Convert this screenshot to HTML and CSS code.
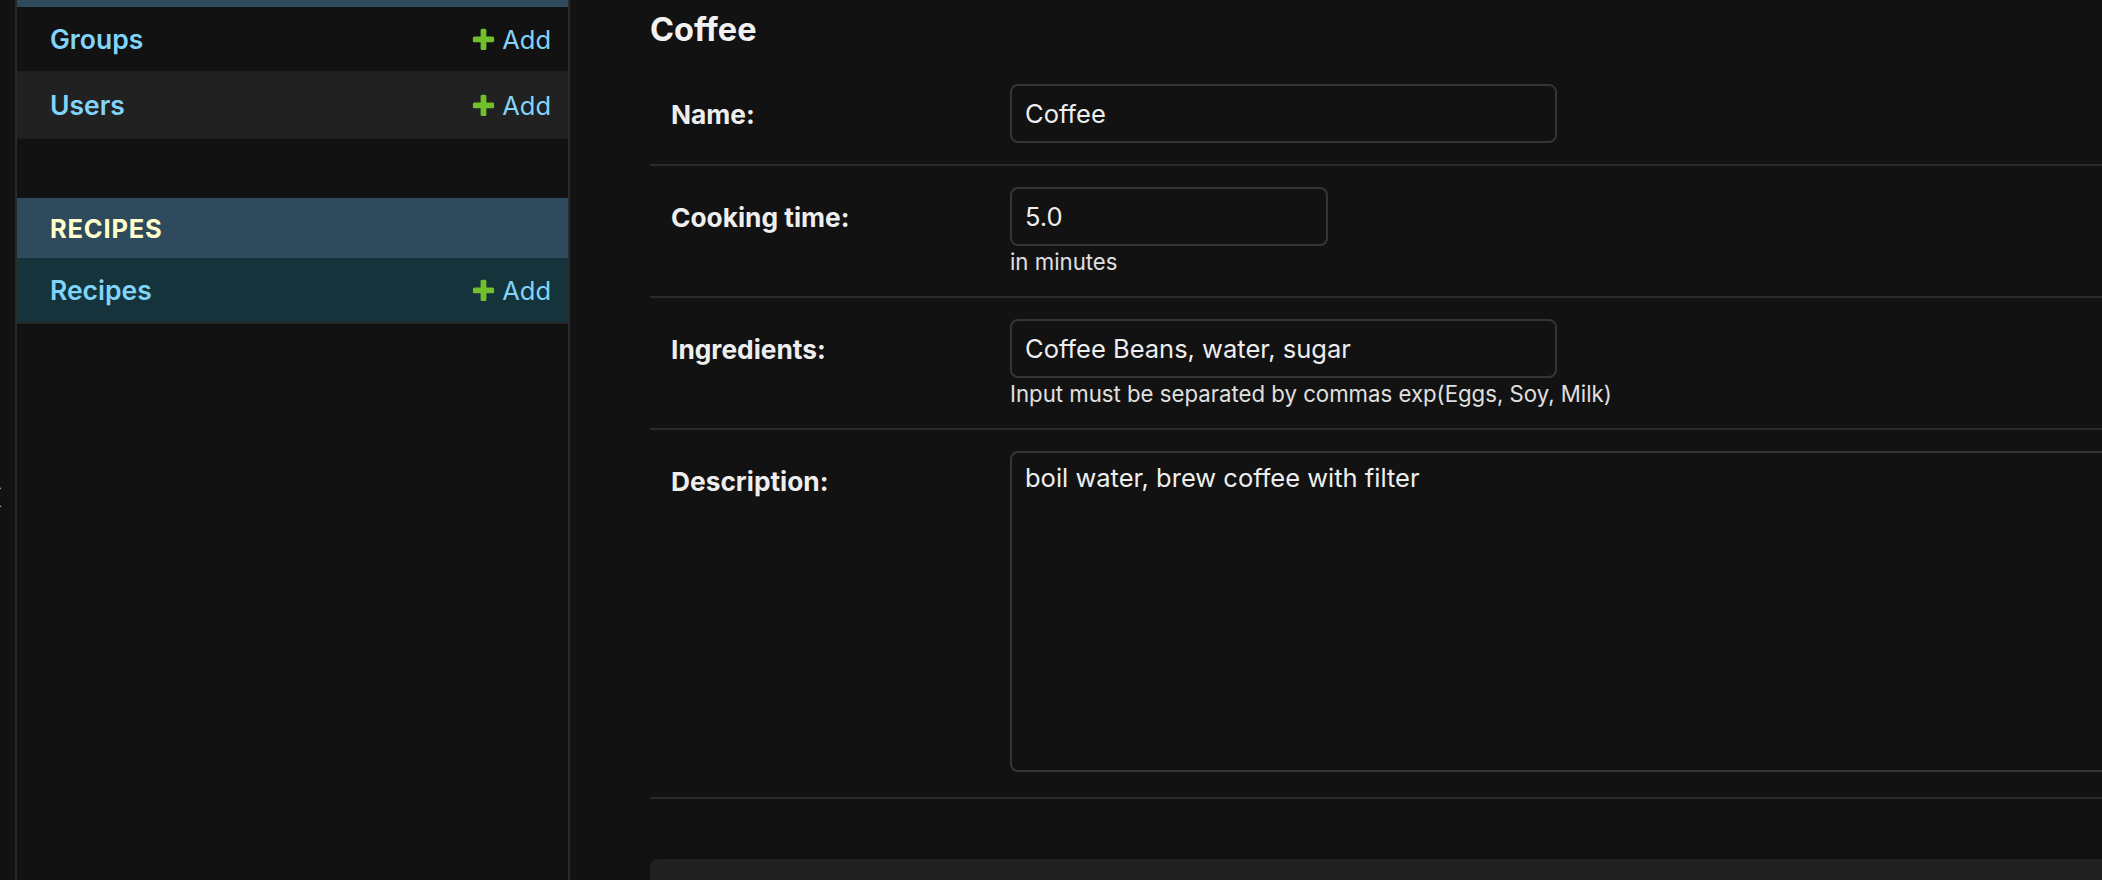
FILE: index.html
```html
<!DOCTYPE html>
<html lang="en">
<head>
<meta charset="utf-8">
<title>Change recipe | Django site admin</title>
<link rel="stylesheet" href="styles.css">
</head>
<body>
<div class="page">
  <div class="toggle"><span class="toggle-glyph">«</span></div>
  <nav class="sidebar">
    <div class="module">
      <div class="caption-tail"></div>
      <div class="model-row">
        <a class="model-link" href="#">Groups</a>
        <a class="addlink" href="#"><svg class="plus" viewBox="0 0 1792 1792" width="27" height="27"><path fill="#70bf2b" d="M1600 796v192q0 40-28 68t-68 28h-416v416q0 40-28 68t-68 28h-192q-40 0-68-28t-28-68v-416h-416q-40 0-68-28t-28-68v-192q0-40 28-68t68-28h416v-416q0-40 28-68t68-28h192q40 0 68 28t28 68v416h416q40 0 68 28t28 68z"/></svg>Add</a>
      </div>
      <div class="model-row alt">
        <a class="model-link" href="#">Users</a>
        <a class="addlink" href="#"><svg class="plus" viewBox="0 0 1792 1792" width="27" height="27"><path fill="#70bf2b" d="M1600 796v192q0 40-28 68t-68 28h-416v416q0 40-28 68t-68 28h-192q-40 0-68-28t-28-68v-416h-416q-40 0-68-28t-28-68v-192q0-40 28-68t68-28h416v-416q0-40 28-68t68-28h192q40 0 68 28t28 68v416h416q40 0 68 28t28 68z"/></svg>Add</a>
      </div>
    </div>
    <div class="module">
      <div class="caption">Recipes</div>
      <div class="model-row current">
        <a class="model-link" href="#">Recipes</a>
        <a class="addlink" href="#"><svg class="plus" viewBox="0 0 1792 1792" width="27" height="27"><path fill="#70bf2b" d="M1600 796v192q0 40-28 68t-68 28h-416v416q0 40-28 68t-68 28h-192q-40 0-68-28t-28-68v-416h-416q-40 0-68-28t-28-68v-192q0-40 28-68t68-28h416v-416q0-40 28-68t68-28h192q40 0 68 28t28 68v416h416q40 0 68 28t28 68z"/></svg>Add</a>
      </div>
    </div>
  </nav>
  <main class="main">
    <h2 class="title">Coffee</h2>
    <div class="fieldset">
      <div class="form-row">
        <label class="label">Name:</label>
        <div class="field">
          <input class="input wide" type="text" value="Coffee">
        </div>
      </div>
      <div class="form-row">
        <label class="label">Cooking time:</label>
        <div class="field">
          <input class="input short" type="text" value="5.0">
          <div class="help">in minutes</div>
        </div>
      </div>
      <div class="form-row">
        <label class="label">Ingredients:</label>
        <div class="field">
          <input class="input wide" type="text" value="Coffee Beans, water, sugar">
          <div class="help">Input must be separated by commas exp(Eggs, Soy, Milk)</div>
        </div>
      </div>
      <div class="form-row">
        <label class="label">Description:</label>
        <div class="field">
          <textarea class="textarea">boil water, brew coffee with filter</textarea>
        </div>
      </div>
    </div>
    <div class="submit-row"></div>
  </main>
</div>
</body>
</html>
```

FILE: styles.css
```css
html, body {
  margin: 0;
  padding: 0;
  background: #121212;
  overflow: hidden;
}
body {
  width: 2102px;
  height: 880px;
  font-family: Inter, "Noto Sans", "Liberation Sans", sans-serif;
  color: #eeeeee;
}
.page {
  display: flex;
  height: 880px;
}
.toggle {
  position: relative;
  width: 15px;
  flex-shrink: 0;
  border-right: 2px solid #2a2a2a;
  overflow: hidden;
}
.toggle-glyph {
  position: absolute;
  right: 12px;
  top: 470px;
  font-size: 42px;
  line-height: 50px;
  color: #81d4fa;
}
.sidebar {
  width: 551px;
  flex-shrink: 0;
  border-right: 2px solid #2a2a2a;
  background: #121212;
}
.module {
  margin-bottom: 59px;
}
.caption-tail {
  height: 7px;
  background: #2f4a5c;
}
.caption {
  height: 60px;
  display: flex;
  align-items: center;
  padding-left: 33px;
  background: #2f4a5c;
  color: #ffffcc;
  font-size: 25.5px;
  font-weight: 700;
  letter-spacing: 0.8px;
  text-transform: uppercase;
}
.model-row {
  height: 64px;
  display: flex;
  align-items: center;
  justify-content: space-between;
  padding: 0 17px 0 33px;
  border-bottom: 2px solid #1e1e1e;
  background: #121212;
}
.model-row.alt {
  background: #212121;
}
.model-row.current {
  background: #14333a;
  border-bottom-color: #272727;
}
.model-link {
  color: #81d4fa;
  text-decoration: none;
  font-size: 26.5px;
  font-weight: 600;
}
.addlink {
  display: flex;
  align-items: center;
  gap: 5px;
  color: #81d4fa;
  text-decoration: none;
  font-size: 25.5px;
}
.plus {
  display: block;
}
.main {
  flex: 1;
  min-width: 0;
  overflow: hidden;
  padding-left: 80px;
}
.title {
  margin: 10px 0 13px;
  font-size: 32.5px;
  line-height: 40px;
  font-weight: 700;
  color: #f2f2f2;
}
.form-row {
  display: flex;
  align-items: flex-start;
  padding: 21px 0 21px 21px;
  border-bottom: 2px solid #2a2a2a;
}
.label {
  flex: 0 0 339px;
  padding-top: 15px;
  font-size: 26.3px;
  line-height: 32px;
  font-weight: 700;
  color: #eeeeee;
}
.field {
  flex: 1;
  min-width: 0;
}
.input {
  display: block;
  box-sizing: border-box;
  height: 59px;
  margin: 0;
  padding: 0 13px;
  border: 2px solid #353535;
  border-radius: 8px;
  background: #121212;
  color: #eeeeee;
  font-family: Inter, "Noto Sans", "Liberation Sans", sans-serif;
  font-size: 25.5px;
  outline: none;
}
.input.wide {
  width: 547px;
}
.input.short {
  width: 318px;
}
.help {
  margin-top: 3px;
  font-size: 22.2px;
  line-height: 26px;
  color: #e0e0e0;
}
.textarea {
  display: block;
  box-sizing: border-box;
  width: 1300px;
  height: 321px;
  margin: 0 0 4px;
  padding: 9px 13px;
  border: 2px solid #353535;
  border-radius: 8px;
  background: #121212;
  color: #eeeeee;
  font-family: Inter, "Noto Sans", "Liberation Sans", sans-serif;
  font-size: 25.5px;
  line-height: 31px;
  resize: none;
  outline: none;
}
.submit-row {
  margin-top: 60px;
  height: 80px;
  background: #212121;
  border-radius: 8px 0 0 0;
}
```
